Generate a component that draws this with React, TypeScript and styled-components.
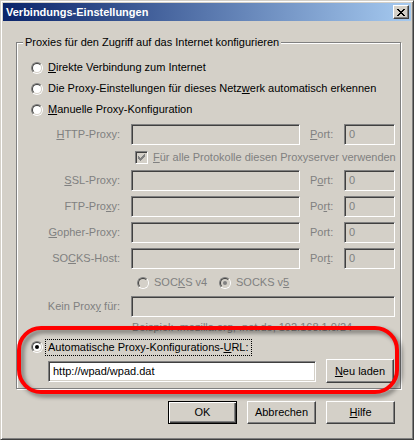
import React from 'react';
import styled, { createGlobalStyle } from 'styled-components';

const GlobalStyle = createGlobalStyle`
  html, body { margin: 0; padding: 0; background: #D4D0C8; }
  body { font-family: Tahoma, "Liberation Sans", Arial, sans-serif; font-size: 11px; line-height: 13px; color: #000; }
  * { box-sizing: border-box; }
`;

const Window = styled.div`
  position: relative;
  width: 414px;
  height: 440px;
  background: #D4D0C8;
  border: 1px solid;
  border-color: #D4D0C8 #404040 #404040 #D4D0C8;
  box-shadow: inset 1px 1px #fff, inset -1px -1px #808080;
  padding: 2px;
  display: flex;
  flex-direction: column;
`;

const TitleBar = styled.div`
  height: 18px;
  flex: none;
  display: flex;
  align-items: center;
  padding-left: 3px;
  padding-right: 2px;
  background: linear-gradient(to right, #0A246A, #A6CAF0);
  color: #fff;
  font-weight: bold;
`;

const CloseButton = styled.div`
  margin-left: auto;
  width: 16px;
  height: 14px;
  background: #D4D0C8;
  border: 1px solid;
  border-color: #fff #404040 #404040 #fff;
  box-shadow: inset -1px -1px #808080;
  display: flex;
  align-items: center;
  justify-content: center;
  padding-right: 1px;
`;

const Body = styled.div`
  flex: 1;
  display: flex;
  flex-direction: column;
  padding: 15px 10px 0 13px;
`;

const Group = styled.fieldset`
  margin: 0;
  padding: 8px 0 5px 14px;
  border: 1px solid #808080;
  box-shadow: inset 1px 1px #fff, 1px 1px #fff;
  min-width: 0;
`;

const Legend = styled.legend`
  margin-left: -8px;
  padding: 0 2px;
  background: #D4D0C8;
  line-height: 13px;
`;

const Stack = styled.div`
  display: flex;
  flex-direction: column;
`;

const RadioRow = styled.div<{ $h?: number; $pl?: number }>`
  display: flex;
  align-items: center;
  height: ${p => p.$h ?? 21}px;
  padding-left: ${p => p.$pl ?? 0}px;
`;

const RadioItem = styled.div<{ $w?: number; $disabled?: boolean }>`
  display: flex;
  align-items: center;
  gap: 5px;
  width: ${p => (p.$w ? `${p.$w}px` : 'auto')};
  color: ${p => (p.$disabled ? '#808080' : '#000')};
  white-space: nowrap;
`;

const RadioOuter = styled.span`
  flex: none;
  width: 12px;
  height: 12px;
  border-radius: 50%;
  border: 1px solid;
  border-color: #808080 #fff #fff #808080;
  display: flex;
  align-items: center;
  justify-content: center;
`;

const RadioInner = styled.span<{ $disabled?: boolean; $checked?: boolean }>`
  width: 10px;
  height: 10px;
  border-radius: 50%;
  border: 1px solid;
  border-color: #404040 #D4D0C8 #D4D0C8 #404040;
  background: ${p => (p.$disabled ? '#D4D0C8' : '#fff')};
  display: flex;
  align-items: center;
  justify-content: center;
  &::after {
    content: '';
    width: 4px;
    height: 4px;
    border-radius: 50%;
    background: ${p => (p.$disabled ? '#808080' : '#000')};
    display: ${p => (p.$checked ? 'block' : 'none')};
  }
`;

const FocusLabel = styled.span`
  margin-left: -3px;
  padding: 1px 2px;
  border: 1px dotted #000;
`;

const FieldRow = styled.div<{ $mt?: number }>`
  display: flex;
  align-items: center;
  height: 21px;
  margin-top: ${p => p.$mt ?? 0}px;
`;

const FieldLabel = styled.span`
  width: 100px;
  padding-right: 11px;
  text-align: right;
  color: #808080;
  white-space: nowrap;
`;

const PortLabel = styled.span`
  width: 44px;
  padding-left: 10px;
  color: #808080;
`;

const Input = styled.div<{ $w: number; $h?: number; $enabled?: boolean }>`
  width: ${p => p.$w}px;
  height: ${p => p.$h ?? 21}px;
  border: 1px solid;
  border-color: #808080 #fff #fff #808080;
  box-shadow: inset 1px 1px #404040, inset -1px -1px #D4D0C8;
  background: ${p => (p.$enabled ? '#fff' : '#D4D0C8')};
  color: ${p => (p.$enabled ? '#000' : '#808080')};
  display: flex;
  align-items: center;
  padding-left: 4px;
  white-space: nowrap;
`;

const CheckRow = styled.div`
  display: flex;
  align-items: center;
  gap: 5px;
  height: 25px;
  padding-left: 104px;
  color: #808080;
`;

const CheckBox = styled.span`
  flex: none;
  width: 13px;
  height: 13px;
  border: 1px solid;
  border-color: #808080 #fff #fff #808080;
  box-shadow: inset 1px 1px #404040, inset -1px -1px #D4D0C8;
  background: #D4D0C8;
  display: block;
  position: relative;
`;

const CheckGlyph = styled.svg`
  position: absolute;
  left: -1px;
  top: -1px;
  display: block;
`;

const Hint = styled.div`
  padding: 4px 0 0 101px;
  height: 18px;
  color: #808080;
  white-space: nowrap;
`;

const UrlRow = styled.div`
  display: flex;
  align-items: center;
  gap: 10px;
  height: 24px;
  padding-left: 17px;
`;

const Button = styled.div<{ $w?: number; $h?: number; $default?: boolean }>`
  width: ${p => p.$w ?? 69}px;
  height: ${p => p.$h ?? 23}px;
  display: flex;
  align-items: center;
  justify-content: center;
  background: #D4D0C8;
  border: 1px solid;
  border-color: ${p => (p.$default ? '#000' : '#fff #404040 #404040 #fff')};
  box-shadow: ${p =>
    p.$default
      ? 'inset 1px 1px #fff, inset -1px -1px #404040, inset -2px -2px #808080'
      : 'inset -1px -1px #808080, inset 1px 1px #D4D0C8'};
  color: #000;
`;

const ButtonRow = styled.div`
  display: flex;
  justify-content: flex-end;
  gap: 10px;
  margin-top: 12px;
  padding-right: 6px;
`;

const Highlight = styled.div`
  position: absolute;
  left: 16px;
  top: 325px;
  width: 382px;
  height: 68px;
  border: 4px solid #ff0000;
  border-radius: 24px;
  filter: drop-shadow(3px 3px 2px rgba(0, 0, 0, 0.45));
  pointer-events: none;
`;

const Radio = ({ checked, disabled }: { checked?: boolean; disabled?: boolean }) => (
  <RadioOuter>
    <RadioInner $checked={checked} $disabled={disabled} />
  </RadioOuter>
);

const CloseGlyph = () => (
  <svg width="8" height="7" viewBox="0 0 8 7" shapeRendering="crispEdges">
    <path
      d="M0 0h2v1H0zM6 0h2v1H6zM1 1h2v1H1zM5 1h2v1H5zM2 2h4v1H2zM3 3h2v1H3zM2 4h4v1H2zM1 5h2v1H1zM5 5h2v1H5zM0 6h2v1H0zM6 6h2v1H6z"
      fill="#000"
    />
  </svg>
);

const proxies: { label: React.ReactNode; port: React.ReactNode; mt: number }[] = [
  { label: <><u>S</u>SL-Proxy:</>, port: <>P<u>o</u>rt:</>, mt: 0 },
  { label: <>FTP-Pro<u>x</u>y:</>, port: <>Po<u>r</u>t:</>, mt: 5 },
  { label: <><u>G</u>opher-Proxy:</>, port: <>Port:</>, mt: 5 },
  { label: <>SO<u>C</u>KS-Host:</>, port: <>Por<u>t</u>:</>, mt: 5 },
];

export default function App() {
  return (
    <>
      <GlobalStyle />
      <Window>
        <TitleBar>
          Verbindungs-Einstellungen
          <CloseButton>
            <CloseGlyph />
          </CloseButton>
        </TitleBar>
        <Body>
          <Group>
            <Legend>Proxies für den Zugriff auf das Internet konfigurieren</Legend>
            <Stack>
              <RadioRow>
                <RadioItem>
                  <Radio />
                  <span><u>D</u>irekte Verbindung zum Internet</span>
                </RadioItem>
              </RadioRow>
              <RadioRow>
                <RadioItem>
                  <Radio />
                  <span>Die Proxy-Einstellungen für dieses Netz<u>w</u>erk automatisch erkennen</span>
                </RadioItem>
              </RadioRow>
              <RadioRow>
                <RadioItem>
                  <Radio />
                  <span><u>M</u>anuelle Proxy-Konfiguration</span>
                </RadioItem>
              </RadioRow>

              <FieldRow $mt={4}>
                <FieldLabel><u>H</u>TTP-Proxy:</FieldLabel>
                <Input $w={169} />
                <PortLabel><u>P</u>ort:</PortLabel>
                <Input $w={51}>0</Input>
              </FieldRow>

              <CheckRow>
                <CheckBox>
                  <CheckGlyph width="13" height="13" viewBox="0 0 13 13" shapeRendering="crispEdges">
                    <path
                      d="M3 5h1v3H3zM4 6h1v3H4zM5 7h1v3H5zM6 6h1v3H6zM7 5h1v3H7zM8 4h1v3H8zM9 3h1v3H9z"
                      fill="#808080"
                    />
                  </CheckGlyph>
                </CheckBox>
                <span><u>F</u>ür alle Protokolle diesen Proxyserver verwenden</span>
              </CheckRow>

              {proxies.map((p, i) => (
                <FieldRow key={i} $mt={p.mt}>
                  <FieldLabel>{p.label}</FieldLabel>
                  <Input $w={169} />
                  <PortLabel>{p.port}</PortLabel>
                  <Input $w={51}>0</Input>
                </FieldRow>
              ))}

              <RadioRow $h={27} $pl={106}>
                <RadioItem $w={82} $disabled>
                  <Radio disabled />
                  <span>SOC<u>K</u>S v4</span>
                </RadioItem>
                <RadioItem $disabled>
                  <Radio disabled checked />
                  <span>SOCKS v<u>5</u></span>
                </RadioItem>
              </RadioRow>

              <FieldRow>
                <FieldLabel>Kein Prox<u>y</u> für:</FieldLabel>
                <Input $w={264} />
              </FieldRow>

              <Hint>Beispiel: .mozilla.org, .net.de, 192.168.1.0/24</Hint>

              <RadioRow $h={24}>
                <RadioItem>
                  <Radio checked />
                  <FocusLabel>Automatische Proxy-Konfigurations-<u>U</u>RL:</FocusLabel>
                </RadioItem>
              </RadioRow>

              <UrlRow>
                <Input $w={268} $enabled>http://wpad/wpad.dat</Input>
                <Button $w={68} $h={24}><span><u>N</u>eu laden</span></Button>
              </UrlRow>
            </Stack>
          </Group>

          <ButtonRow>
            <Button $default>OK</Button>
            <Button>Abbrechen</Button>
            <Button><span><u>H</u>ilfe</span></Button>
          </ButtonRow>
        </Body>
        <Highlight />
      </Window>
    </>
  );
}
